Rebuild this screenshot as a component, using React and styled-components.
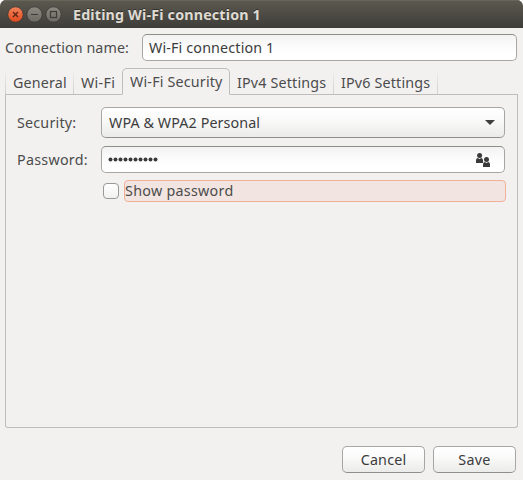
import React from 'react';
import styled, { createGlobalStyle, css } from 'styled-components';

const GlobalStyle = createGlobalStyle`
  * { box-sizing: border-box; }
  html, body { margin: 0; padding: 0; background: #fff; overflow: hidden; }
`;

const Dialog = styled.div`
  display: flex;
  flex-direction: column;
  width: 523px;
  height: 480px;
  background: #f2f1f0;
  border-radius: 6px 6px 0 0;
  overflow: hidden;
  color: #4c4c4c;
  font: 14.3px "Noto Sans", sans-serif;
  white-space: nowrap;
`;

const TitleBar = styled.header`
  display: flex;
  align-items: center;
  height: 28px;
  padding: 1px 0 0 7px;
  background: linear-gradient(#5c5950, #3e3d38);
  box-shadow: inset 0 1px #68655b;
`;

const WindowButton = styled.span`
  display: flex;
  width: 17px;
  height: 17px;
  margin-right: 2px;
`;

const Title = styled.h1`
  margin: 0 0 0 9px;
  font-size: 14.3px;
  font-weight: 700;
  line-height: 28px;
  letter-spacing: 0.16px;
  color: #dfdbd2;
  text-shadow: 0 -1px #33322e;
`;

const Text = styled.span`
  line-height: 20px;
  letter-spacing: ${(p) => p.$spacing || 0.2}px;
`;

const NameRow = styled.div`
  display: flex;
  align-items: center;
  height: 39px;
  padding: 0 6px 0 5px;
`;

const NameLabel = styled(Text)`
  width: 137px;
`;

const fieldFrame = css`
  display: flex;
  align-items: center;
  border: 1px solid #a6a6a4;
  border-radius: 5px;
  padding: 0 7px;
  color: #3c3c3c;
`;

const Entry = styled.div`
  ${fieldFrame}
  flex: 1;
  height: 27px;
  padding-left: 6px;
  border-top-color: #8e8e8c;
  background: linear-gradient(#f3f3f3, #fff 70%);
`;

const Combo = styled.div`
  ${fieldFrame}
  flex: 1;
  height: 31px;
  justify-content: space-between;
  padding-right: 9px;
  border-bottom-color: #8e8e8c;
  background: linear-gradient(#fff, #fafafa 40%, #ebebe9);
`;

const TabStrip = styled.nav`
  display: flex;
  height: 27px;
  margin: 1px 5px 0;
`;

const Tab = styled.div`
  display: flex;
  align-items: center;
  width: ${(p) => p.$width}px;
  height: 27px;
  padding: 4px 0 0 ${(p) => (p.$edge === 'left' ? 8 : 7)}px;
  border-bottom: 1px solid #bfbebd;
  background: ${(p) =>
    p.$edge === 'left'
      ? 'linear-gradient(#f2f1f0, #d0cfcd) left / 1px 100% no-repeat'
      : p.$edge === 'right'
        ? 'linear-gradient(#f2f1f0, #d0cfcd) right / 1px 100% no-repeat'
        : 'none'};
`;

const ActiveTab = styled(Tab)`
  padding-top: 1px;
  border: 1px solid #bfbebd;
  border-bottom-color: transparent;
  border-radius: 5px 5px 0 0;
`;

const TabFill = styled.div`
  flex: 1;
  height: 27px;
  border-bottom: 1px solid #bfbebd;
`;

const Panel = styled.main`
  height: 333px;
  margin: 0 5px;
  padding: 12px 12px 0 11px;
  border: 1px solid #bfbebd;
  border-top: 0;
  border-radius: 0 0 3px 3px;
`;

const FormRow = styled.div`
  display: flex;
  align-items: center;
  margin-bottom: ${(p) => p.$gap || 0}px;
`;

const FieldLabel = styled(Text)`
  width: 84px;
`;

const PasswordEntry = styled(Entry)`
  justify-content: space-between;
  padding-right: 14px;
`;

const CheckRow = styled.label`
  display: flex;
  align-items: center;
  margin: 0 -1px 0 86px;
`;

const CheckBox = styled.span`
  width: 16px;
  height: 16px;
  margin-right: 5px;
  border: 1px solid #999997;
  border-radius: 4px;
  background: linear-gradient(#fff, #f1f1f0);
`;

const CheckLabel = styled.span`
  display: flex;
  align-items: center;
  flex: 1;
  height: 22px;
  border: 1px solid #f3b099;
  border-radius: 4px;
  background: #f2e4e0;
`;

const Actions = styled.footer`
  display: flex;
  justify-content: flex-end;
  gap: 8px;
  padding: 18px 7px 0 0;
`;

const Button = styled.div`
  ${fieldFrame}
  justify-content: center;
  width: 83px;
  height: 27px;
  border-bottom-color: #8e8e8c;
  background: linear-gradient(#fff, #fafafa 40%, #ebebe9);
`;

const glyphs = {
  close: <path d="M6 6l5 5M11 6l-5 5" />,
  minimize: <path d="M5 8.5h7" />,
  maximize: <rect x="5.5" y="5.5" width="6" height="6" />,
};

function WindowControl({ kind }) {
  const close = kind === 'close';
  const id = `fill-${kind}`;
  return (
    <WindowButton>
      <svg width="17" height="17" viewBox="0 0 17 17">
        <defs>
          <linearGradient id={id} x1="0" y1="0" x2="0" y2="1">
            <stop offset="0" stopColor={close ? '#f4835c' : '#8d8a82'} />
            <stop offset="1" stopColor={close ? '#df4a1d' : '#6b6963'} />
          </linearGradient>
        </defs>
        <circle cx="8.5" cy="8.5" r="7.7" fill={`url(#${id})`} stroke="#3b3934" strokeWidth="0.8" />
        <g fill="none" stroke={close ? '#552113' : '#3c3b37'} strokeWidth="1.2">{glyphs[kind]}</g>
      </svg>
    </WindowButton>
  );
}

const DropArrow = () => (
  <svg width="10" height="5" viewBox="0 0 10 5">
    <path d="M0 0h10L5 5z" fill="#3f3f3f" />
  </svg>
);

const UsersIcon = () => (
  <svg width="14" height="14" viewBox="0 0 14 14" fill="#3a3a3a">
    <circle cx="3.6" cy="2.5" r="2.5" />
    <path d="M0 10V7.2Q0 5.3 1.8 5.1L3.5 5.9l1.7-.8Q7 5.3 7 7.2V10z" />
    <circle cx="10.5" cy="6.5" r="2.5" />
    <path d="M7 14v-2.8Q7 9.3 8.8 9.1l1.7.8 1.7-.8q1.8.2 1.8 2.1V14z" />
  </svg>
);

const PasswordDots = () => (
  <svg width="50" height="5" viewBox="0 0 50 5" fill="#3a3a3a">
    {Array.from({ length: 10 }, (_, i) => (
      <circle key={i} cx={2.5 + i * 5} cy="2.5" r="2" />
    ))}
  </svg>
);

export default function App() {
  return (
    <>
      <GlobalStyle />
      <Dialog>
        <TitleBar>
          <WindowControl kind="close" />
          <WindowControl kind="minimize" />
          <WindowControl kind="maximize" />
          <Title>Editing Wi-Fi connection 1</Title>
        </TitleBar>
        <NameRow>
          <NameLabel $spacing={0.1}>Connection name:</NameLabel>
          <Entry><Text $spacing={0.15}>Wi-Fi connection 1</Text></Entry>
        </NameRow>
        <TabStrip>
          <Tab $width={68} $edge="left"><Text $spacing={0.15}>General</Text></Tab>
          <Tab $width={49} $edge="left"><Text $spacing={0.3}>Wi-Fi</Text></Tab>
          <ActiveTab $width={108}><Text $spacing={0.18}>Wi-Fi Security</Text></ActiveTab>
          <Tab $width={104} $edge="right"><Text $spacing={0.17}>IPv4 Settings</Text></Tab>
          <Tab $width={104} $edge="right"><Text $spacing={0.17}>IPv6 Settings</Text></Tab>
          <TabFill />
        </TabStrip>
        <Panel>
          <FormRow $gap={8}>
            <FieldLabel $spacing={0.2}>Security:</FieldLabel>
            <Combo><Text $spacing={0.1}>WPA &amp; WPA2 Personal</Text><DropArrow /></Combo>
          </FormRow>
          <FormRow $gap={7}>
            <FieldLabel $spacing={0.27}>Password:</FieldLabel>
            <PasswordEntry><PasswordDots /><UsersIcon /></PasswordEntry>
          </FormRow>
          <CheckRow>
            <CheckBox />
            <CheckLabel><Text $spacing={0.28}>Show password</Text></CheckLabel>
          </CheckRow>
        </Panel>
        <Actions>
          <Button><Text $spacing={0.2}>Cancel</Text></Button>
          <Button><Text $spacing={0.35}>Save</Text></Button>
        </Actions>
      </Dialog>
    </>
  );
}
